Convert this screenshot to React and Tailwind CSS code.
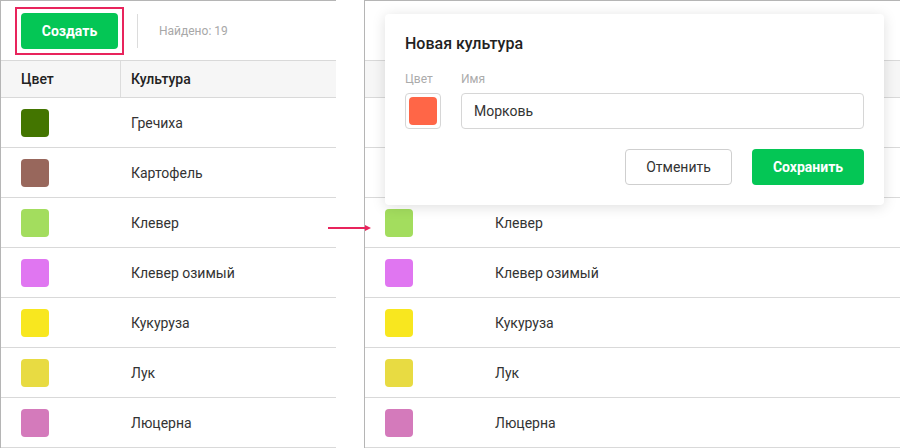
import React from 'react';

const crops = [
  { name: 'Гречиха', color: '#437500' },
  { name: 'Картофель', color: '#98675c' },
  { name: 'Клевер', color: '#a3dd5e' },
  { name: 'Клевер озимый', color: '#e076f1' },
  { name: 'Кукуруза', color: '#f8e71f' },
  { name: 'Лук', color: '#e8db42' },
  { name: 'Люцерна', color: '#d47abb' },
];

// One table panel: toolbar, header row and the list of crops.
// "covered" = the part under the dialog is left empty.
const CropTable = ({ highlight, covered, className }) => (
  <div className={`border-l border-t border-[#b5b5b5] ${className}`}>
    <div className="h-[59px] flex items-center pl-[14px]">
      {!covered && (
        <>
          <div className={`p-1 border-2 ${highlight ? 'border-[#e8245c]' : 'border-transparent'}`}>
            <button className="w-[97px] h-9 rounded bg-[#04c655] text-white text-sm font-bold">
              Создать
            </button>
          </div>
          <div className="w-px h-[34px] bg-[#dcdcdc] ml-[13px]" />
          <span className="ml-[21px] text-xs text-[#a8a8a8]">Найдено: 19</span>
        </>
      )}
    </div>

    {/* Header */}
    <div className="h-[38px] flex border-y border-[#d9d9d9] bg-[#f6f6f6] text-sm font-medium text-[#222]">
      <div className="w-[120px] pl-5 flex items-center border-r border-[#dcdcdc]">{!covered && 'Цвет'}</div>
      <div className="pl-[10px] flex items-center">{!covered && 'Культура'}</div>
    </div>

    {crops.map((c, i) => {
      const hidden = covered && i < 2;
      return (
        <div key={c.name} className="h-[50px] flex items-center border-b border-[#d9d9d9] text-sm text-[#333]">
          <div className="w-[120px] pl-5 flex items-center">
            {!hidden && <div className="w-7 h-7 rounded" style={{ backgroundColor: c.color }} />}
          </div>
          <div className="pl-[10px]">{!hidden && c.name}</div>
        </div>
      );
    })}
  </div>
);

const App = () => {
  return (
    <div className="relative w-[900px] h-[448px] bg-white overflow-hidden font-['Roboto',sans-serif] flex">
      <CropTable highlight className="w-[336px]" />
      <div className="w-[28px]" />

      {/* Right panel with the dialog on top */}
      <div className="relative flex-1">
        <CropTable covered className="w-full" />

        <div className="absolute left-[21px] top-[14px] w-[499px] bg-white rounded shadow-[0_2px_14px_rgba(0,0,0,0.13)] p-5">
          <div className="text-base font-medium text-[#222] leading-5">Новая культура</div>
          <div className="flex gap-5 mt-[17px]">
            <div>
              <div className="text-xs text-[#ababab] leading-4 mb-[6px]">Цвет</div>
              <div className="w-9 h-9 border border-[#d6d6d6] rounded flex items-center justify-center">
                <div className="w-7 h-7 rounded bg-[#ff6647]" />
              </div>
            </div>
            <div className="flex-1">
              <div className="text-xs text-[#ababab] leading-4 mb-[6px]">Имя</div>
              <div className="h-9 border border-[#d6d6d6] rounded flex items-center pl-3 text-sm text-[#333]">
                Морковь
              </div>
            </div>
          </div>
          <div className="flex justify-end gap-5 mt-5">
            <button className="w-[107px] h-9 border border-[#cfcfcf] rounded text-sm text-[#333]">
              Отменить
            </button>
            <button className="w-[112px] h-9 rounded bg-[#04c655] text-white text-sm font-bold">
              Сохранить
            </button>
          </div>
        </div>
      </div>

      {/* Annotation arrow */}
      <svg className="absolute left-[328px] top-[224px]" width="44" height="8" viewBox="0 0 44 8">
        <line x1="0" y1="4" x2="38" y2="4" stroke="#e8245c" strokeWidth="2" />
        <polygon points="37,1 43,4 37,7" fill="#e8245c" />
      </svg>
    </div>
  );
};

export default App;
